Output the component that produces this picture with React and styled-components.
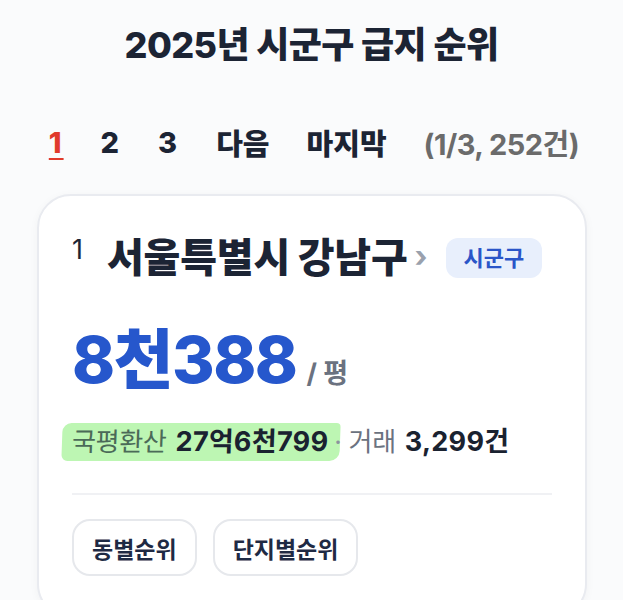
import React from "react";
import styled, { createGlobalStyle } from "styled-components";

const Global = createGlobalStyle`
  html, body { margin: 0; padding: 0; background: #fafbfc; }
  body { font-family: Inter, "Noto Sans CJK KR", sans-serif; color: #1c2434; }
  * { box-sizing: border-box; }
`;

const Page = styled.div`
  width: 623px;
  height: 600px;
  overflow: hidden;
  padding-top: 21px;
  background: #fafbfc;
`;

const Title = styled.h1`
  margin: 0;
  text-align: center;
  font-size: 36px;
  font-weight: 800;
  line-height: 48px;
  letter-spacing: -0.6px;
  color: #1c2434;
`;

const Pager = styled.nav`
  display: flex;
  justify-content: center;
  align-items: center;
  gap: 37px;
  margin-top: 50px;
  height: 46px;
  font-size: 29px;
  font-weight: 800;
  padding-left: 5px;
`;

const PageLink = styled.span`
  color: ${(p) => (p.$active ? "#e03a2c" : "#1c2434")};
  text-decoration: ${(p) => (p.$active ? "underline" : "none")};
  text-underline-offset: 5px;
  text-decoration-thickness: 2px;
  letter-spacing: ${(p) => (p.$digit ? "2px" : "0")};
`;

const PageInfo = styled.span`
  color: #6b6b6b;
  font-weight: 700;
  letter-spacing: -0.5px;
`;

const Card = styled.section`
  margin: 29px 36px 0 37px;
  background: #fff;
  border: 2px solid #e9ebf0;
  border-radius: 34px;
  padding: 34px 33px 40px;
  box-shadow: 0 2px 10px rgba(20, 30, 60, 0.04);
`;

const Head = styled.div`
  display: flex;
  align-items: center;
`;

const Rank = styled.span`
  align-self: flex-start;
  font-size: 27px;
  font-weight: 400;
  color: #1c2434;
  margin-right: 24px;
  line-height: 30px;
  margin-top: 5px;
`;

const Region = styled.span`
  font-size: 40px;
  font-weight: 900;
  letter-spacing: -0.2px;
  color: #1c2434;
  line-height: 56px;
`;

const Chevron = styled.span`
  color: #9aa1ad;
  font-size: 30px;
  font-weight: 700;
  margin: -4px 18px 0 7px;
`;

const Badge = styled.span`
  background: #e8effc;
  color: #2a55c8;
  font-size: 22px;
  font-weight: 700;
  border-radius: 12px;
  padding: 7px 18px;
  line-height: 26px;
`;

const PriceRow = styled.div`
  display: flex;
  align-items: baseline;
  margin-top: 34px;
`;

const Price = styled.span`
  font-size: 65px;
  font-weight: 800;
  color: #2657cc;
  letter-spacing: -1.5px;
  line-height: 80px;
`;

const Unit = styled.span`
  font-size: 27px;
  font-weight: 700;
  color: #6b7280;
  margin-left: 10px;
`;

const Stats = styled.div`
  display: flex;
  align-items: center;
  margin-top: 23px;
  font-size: 26px;
  line-height: 36px;
  letter-spacing: -0.3px;
`;

const Highlight = styled.span`
  display: inline-flex;
  align-items: center;
  gap: 9px;
  background: #bdf6b3;
  border-radius: 9px 4px 10px 6px;
  padding: 1px 12px 1px 10px;
  margin-left: -10px;
  transform: skewX(-2deg);
`;

const Muted = styled.span`
  color: ${(p) => p.$color || "#6b7280"};
  font-weight: 400;
`;

const Strong = styled.span`
  color: #1a2230;
  font-weight: 700;
  font-size: 27px;
  letter-spacing: 0.3px;
`;

const Dot = styled.span`
  position: relative;
  z-index: 1;
  color: #8b929e;
  margin: 0 7px 0 -6px;
`;

const Divider = styled.hr`
  border: 0;
  border-top: 2px solid #f0f1f4;
  margin: 32px 0 24px;
`;

const Buttons = styled.div`
  display: flex;
  gap: 16px;
`;

const Chip = styled.button`
  font-family: inherit;
  background: #fff;
  border: 2px solid #e6e8ec;
  border-radius: 18px;
  height: 57px;
  padding: 0 18px;
  font-size: 23px;
  font-weight: 700;
  color: #1f2a44;
`;

export default function App() {
  return (
    <Page>
      <Global />
      <Title>2025년 시군구 급지 순위</Title>
      <Pager>
        <PageLink $active $digit>1</PageLink>
        <PageLink $digit>2</PageLink>
        <PageLink $digit>3</PageLink>
        <PageLink>다음</PageLink>
        <PageLink>마지막</PageLink>
        <PageInfo>(1/3, 252건)</PageInfo>
      </Pager>
      <Card>
        <Head>
          <Rank>1</Rank>
          <Region>서울특별시 강남구</Region>
          <Chevron>›</Chevron>
          <Badge>시군구</Badge>
        </Head>
        <PriceRow>
          <Price>8천388</Price>
          <Unit>/ 평</Unit>
        </PriceRow>
        <Stats>
          <Highlight>
            <Muted $color="#4b6a58">국평환산</Muted>
            <Strong>27억6천799</Strong>
          </Highlight>
          <Dot>·</Dot>
          <Muted>거래</Muted>
          <Strong style={{ marginLeft: 9 }}>3,299건</Strong>
        </Stats>
        <Divider />
        <Buttons>
          <Chip>동별순위</Chip>
          <Chip>단지별순위</Chip>
        </Buttons>
      </Card>
    </Page>
  );
}
